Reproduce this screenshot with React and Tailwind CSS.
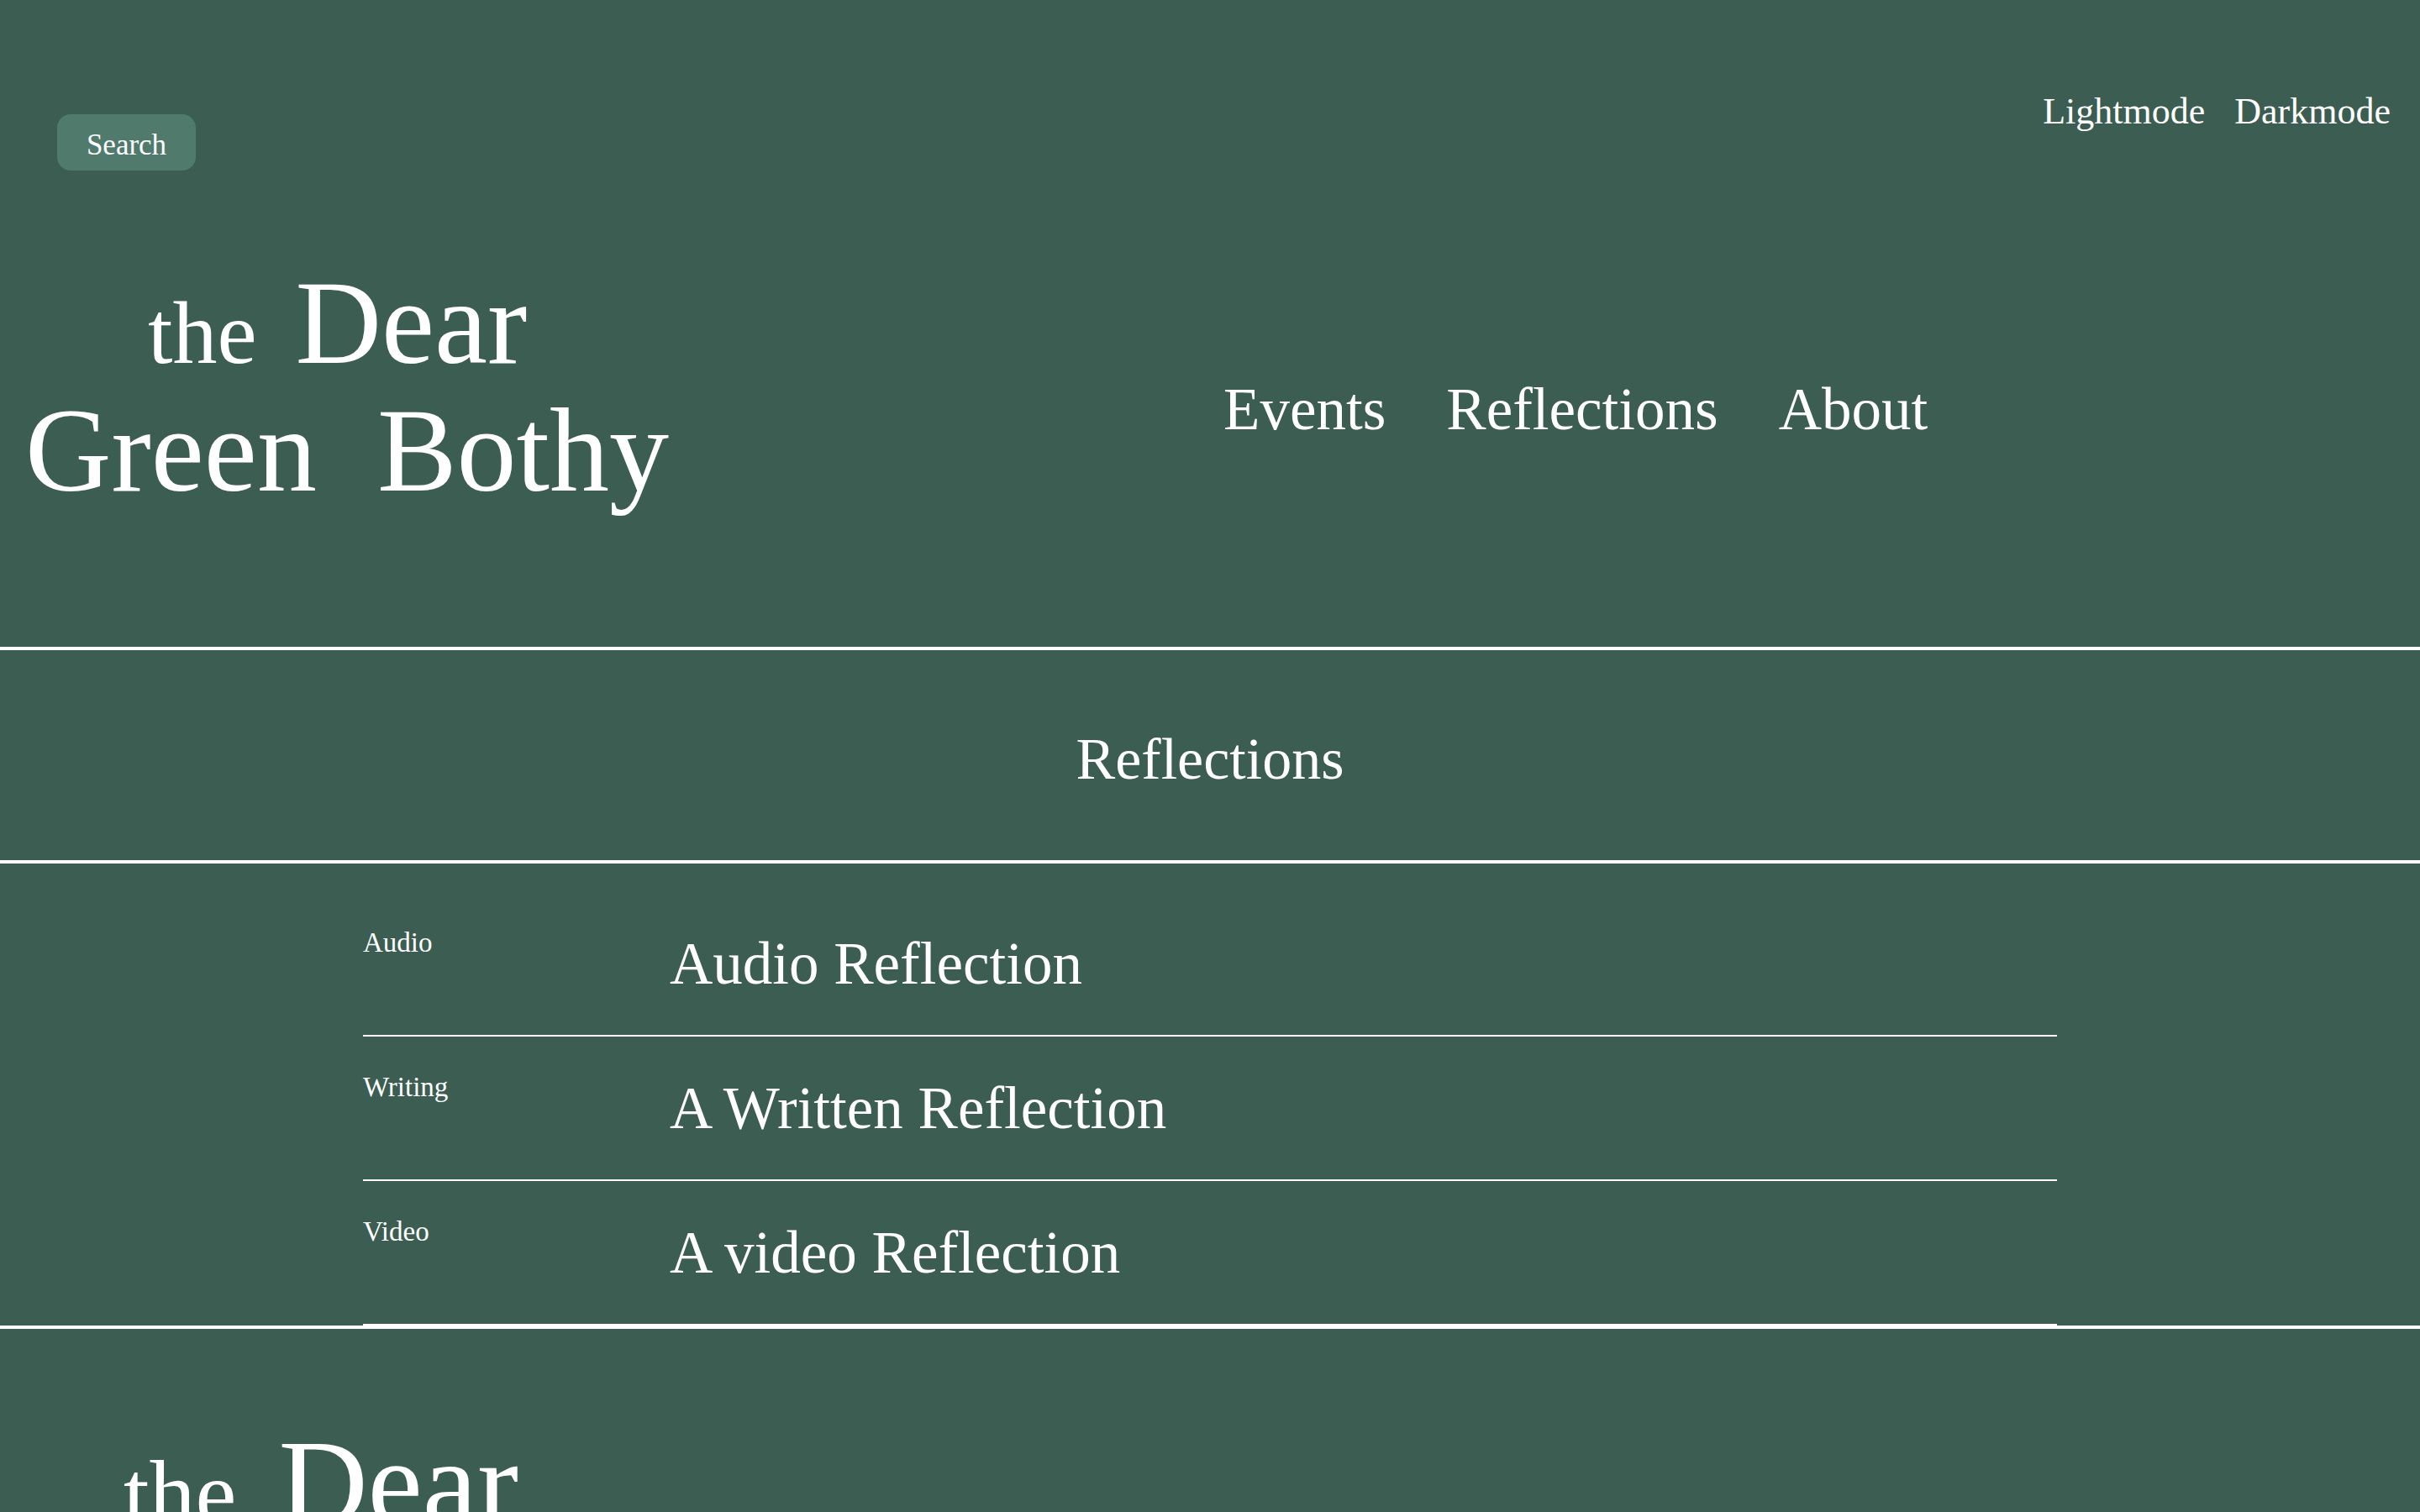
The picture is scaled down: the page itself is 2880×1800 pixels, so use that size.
import React from "react";

function Logo({ big = false }) {
  return (
    <div className="flex flex-col leading-[148px]">
      <div className={big ? "flex items-baseline pl-[117px]" : "flex items-baseline pl-[146px]"}>
        <span className={big ? "text-[110px]" : "text-[106px]"}>the</span>
        <span className={big ? "text-[147px] ml-[50px]" : "text-[142px] ml-[46px]"}>Dear</span>
      </div>
      <div className="-mt-[9px] flex items-baseline">
        <span className={big ? "text-[147px]" : "text-[142px]"}>Green</span>
        <span className={big ? "text-[147px] ml-[74px]" : "text-[142px] ml-[72px]"}>Bothy</span>
      </div>
    </div>
  );
}

const rows = [
  { label: "Audio", title: "Audio Reflection" },
  { label: "Writing", title: "A Written Reflection" },
  { label: "Video", title: "A video Reflection" },
];

export default function App() {
  return (
    <div className="min-h-screen bg-[#3c5d51] text-white font-['Liberation_Serif',serif]">
      <header className="h-[774px] border-b-4 border-white">
        <div className="flex items-start justify-between">
          <button className="ml-[68px] mt-[136px] h-[67px] w-[165px] rounded-[16px] bg-[#4f7a6c] pt-[6px] text-[35px] leading-[35px] text-white">
            Search
          </button>
          <div className="mr-[35px] mt-[111px] flex gap-[35px] text-[44px] leading-[44px]">
            <span>Lightmode</span>
            <span>Darkmode</span>
          </div>
        </div>
        <div className="mt-[107px] flex items-start">
          <div className="ml-[30px]">
            <Logo />
          </div>
          <nav className="ml-[660px] mt-[142px] flex gap-[72px] text-[71px] leading-[71px]">
            <a>Events</a>
            <a>Reflections</a>
            <a>About</a>
          </nav>
        </div>
      </header>

      <section className="flex h-[254px] items-center justify-center border-b-4 border-white pt-[10px]">
        <h1 className="text-[70px] leading-[70px]">Reflections</h1>
      </section>

      <section className="border-b-4 border-white pt-[34px]">
        <div className="mx-auto w-[2016px]">
          {rows.map((r) => (
            <div key={r.label} className="flex h-[172px] items-start border-b-2 border-white pt-[44px]">
              <div className="w-[365px] text-[33px] leading-[33px]">{r.label}</div>
              <div className="mt-[6px] text-[71px] leading-[71px]">{r.title}</div>
            </div>
          ))}
        </div>
      </section>

      <footer className="pt-[110px] pb-[80px]">
        <div className="ml-[30px]">
          <Logo big />
        </div>
      </footer>
    </div>
  );
}
